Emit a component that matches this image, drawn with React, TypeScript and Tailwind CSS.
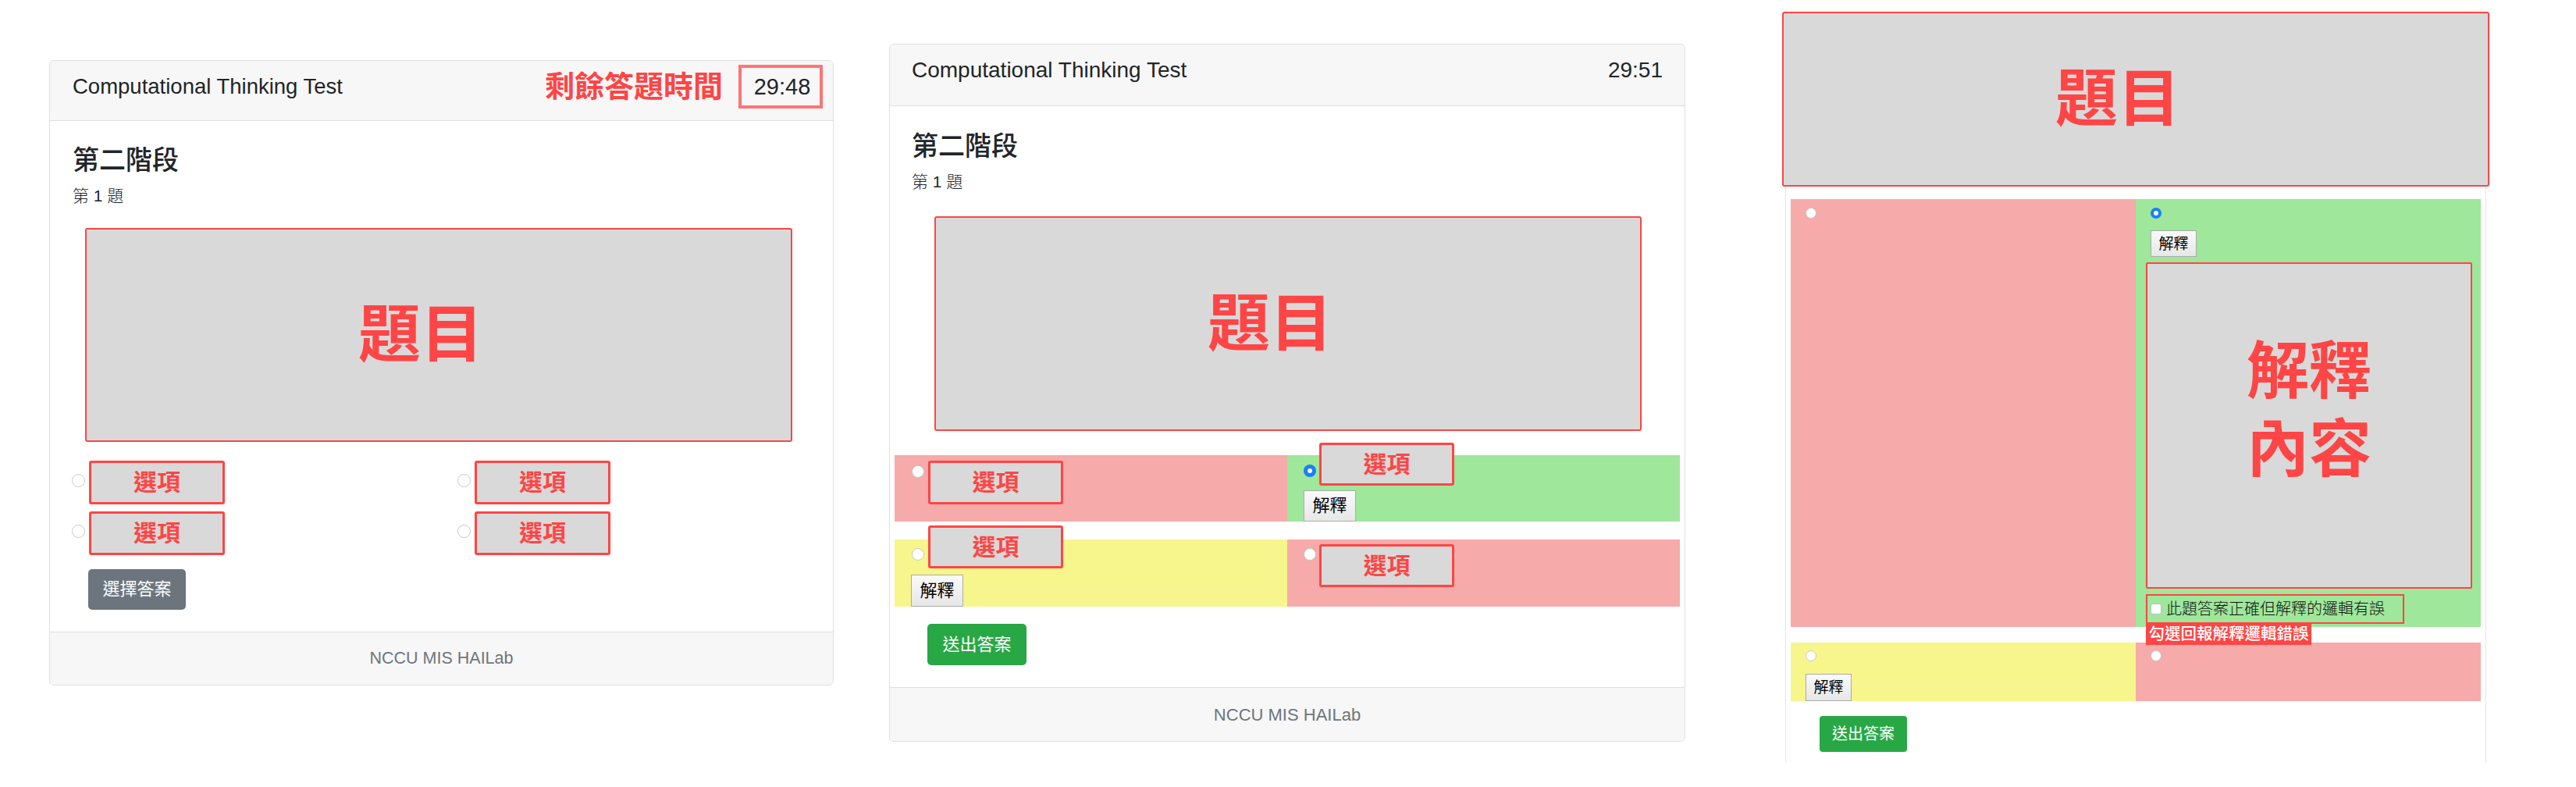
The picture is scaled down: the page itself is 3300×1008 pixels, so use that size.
import React from "react";

const FONT = "font-['Liberation_Sans','Noto_Sans_CJK_TC',sans-serif]";

function Radio({ cls, checked = false }: { cls: string; checked?: boolean }) {
  if (checked) {
    return (
      <span className={"flex shrink-0 items-center justify-center rounded-full bg-[#1a7ffb] " + cls}>
        <span className="block h-[6px] w-[6px] rounded-full bg-white" />
      </span>
    );
  }
  return <span className={"block shrink-0 rounded-full border border-[#c9c9c9] bg-white " + cls} />;
}

function OptionBox({ cls }: { cls: string }) {
  return (
    <div
      className={
        "flex shrink-0 items-center justify-center rounded-[3px] border-[3px] border-[#ff4545] bg-[#d9d9d9] text-[30px] leading-none font-bold text-[#ff4545] " +
        cls
      }
    >
      選項
    </div>
  );
}

function ExplainBtn({ cls }: { cls: string }) {
  return (
    <div
      className={
        "flex shrink-0 items-center justify-center border border-[#ababab] bg-gradient-to-b from-[#fafafa] to-[#e7e7e7] leading-none font-normal text-black " +
        cls
      }
    >
      解釋
    </div>
  );
}

function QuestionBox({ cls }: { cls: string }) {
  return (
    <div
      className={
        "flex shrink-0 items-center justify-center rounded-[3px] border-2 border-[#ff4545] bg-[#d9d9d9] pr-[46px] text-[80px] leading-none font-bold text-[#ff4545] " +
        cls
      }
    >
      題目
    </div>
  );
}

function Panel1() {
  return (
    <div className="mt-[77px] ml-[63px] w-[1005px] shrink-0 overflow-hidden rounded-[6px] border border-[#dfdfdf] bg-white">
      <div className="flex h-[77px] items-center justify-between border-b border-[#dfdfdf] bg-[#f7f7f7] pr-[13px] pb-[10px] pl-[29px]">
        <div className="text-[27.5px] leading-[28px] text-[#212529]">Computational Thinking Test</div>
        <div className="flex items-center gap-[20px]">
          <div className="text-[38px] leading-none font-bold text-[#ff4545]">剩餘答題時間</div>
          <div className="flex h-[56px] w-[108px] items-center justify-center border-[4px] border-[#ff7575] pl-[4px] text-[29px] leading-none text-[#212529]">
            29:48
          </div>
        </div>
      </div>
      <div className="flex flex-col pt-[33px] pr-[29px] pb-[28px] pl-[29px]">
        <div className="h-[34px] text-[34px] leading-[34px] font-medium text-[#212529]">第二階段</div>
        <div className="mt-[18px] h-[21px] text-[21px] leading-[21px] font-light text-[#212529]">第 1 題</div>
        <QuestionBox cls="mt-[31px] ml-[16px] h-[274px] w-[906px]" />
        <div className="mt-[24px] -ml-[1px] grid grid-cols-[494px_494px] gap-y-[9px]">
          {[0, 1, 2, 3].map((i) => (
            <div key={i} className="flex items-center">
              <Radio cls="-mt-[5px] h-[17px] w-[17px]" />
              <OptionBox cls="ml-[5px] h-[56px] w-[174px]" />
            </div>
          ))}
        </div>
        <div className="mt-[18px] ml-[20px] flex h-[52px] w-[125px] items-center justify-center rounded-[5px] bg-[#6c757d] text-[22px] leading-none text-white">
          選擇答案
        </div>
      </div>
      <div className="flex h-[68px] items-center justify-center border-t border-[#dfdfdf] bg-[#f7f7f7] text-[21.5px] text-[#6c757d]">
        NCCU MIS HAILab
      </div>
    </div>
  );
}

function Panel2() {
  return (
    <div className="mt-[56px] ml-[71px] w-[1020px] shrink-0 overflow-hidden rounded-[6px] border border-[#dfdfdf] bg-white">
      <div className="flex h-[79px] items-center justify-between border-b border-[#dfdfdf] bg-[#f7f7f7] pr-[28px] pb-[12px] pl-[28px]">
        <div className="text-[28px] leading-[28px] text-[#212529]">Computational Thinking Test</div>
        <div className="text-[28px] leading-[28px] text-[#212529]">29:51</div>
      </div>
      <div className="flex flex-col pt-[34px] pb-[28px]">
        <div className="ml-[28px] h-[34px] text-[34px] leading-[34px] font-medium text-[#212529]">第二階段</div>
        <div className="mt-[18px] ml-[28px] h-[21px] text-[21px] leading-[21px] font-light text-[#212529]">第 1 題</div>
        <QuestionBox cls="mt-[34px] ml-[57px] h-[275px] w-[906px]" />
        <div className="mt-[31px] ml-[6px] grid w-[1006px] grid-cols-2">
          <div className="h-[85px] bg-[#f6aaaa] pl-[22px]">
            <div className="flex items-start">
              <Radio cls="mt-[13px] h-[16px] w-[16px]" />
              <OptionBox cls="mt-[7px] ml-[5px] h-[56px] w-[173px]" />
            </div>
          </div>
          <div className="h-[85px] bg-[#9ee79b] pl-[21px]">
            <div className="flex h-[45px] items-start">
              <Radio checked cls="mt-[12px] h-[16px] w-[16px]" />
              <OptionBox cls="-mt-[16px] ml-[4px] h-[55px] w-[173px]" />
            </div>
            <ExplainBtn cls="h-[40px] w-[67px] text-[22px]" />
          </div>
        </div>
        <div className="mt-[23px] ml-[6px] grid w-[1006px] grid-cols-2">
          <div className="h-[86px] bg-[#f6f68c] pl-[21px]">
            <div className="flex h-[45px] items-start">
              <Radio cls="mt-[11px] ml-[1px] h-[16px] w-[16px]" />
              <OptionBox cls="-mt-[18px] ml-[5px] h-[55px] w-[173px]" />
            </div>
            <ExplainBtn cls="h-[41px] w-[67px] text-[22px]" />
          </div>
          <div className="h-[86px] bg-[#f6aaaa] pl-[21px]">
            <div className="flex items-start">
              <Radio cls="mt-[11px] h-[16px] w-[16px]" />
              <OptionBox cls="mt-[6px] ml-[4px] h-[55px] w-[173px]" />
            </div>
          </div>
        </div>
        <div className="mt-[22px] ml-[48px] flex h-[53px] w-[127px] items-center justify-center rounded-[5px] bg-[#28a745] text-[22px] leading-none text-white">
          送出答案
        </div>
      </div>
      <div className="flex h-[69px] items-center justify-center border-t border-[#dfdfdf] bg-[#f7f7f7] text-[22px] text-[#6c757d]">
        NCCU MIS HAILab
      </div>
    </div>
  );
}

function Panel3() {
  return (
    <div className="mt-[15px] ml-[124px] flex w-[906px] shrink-0 flex-col">
      <QuestionBox cls="h-[224px] w-[906px]" />
      <div className="ml-[4px] flex h-[738px] w-[898px] shrink-0 flex-col border-x border-[#e6e6e6] bg-white">
        <div className="mt-[16px] ml-[6px] grid w-[884px] shrink-0 grid-cols-2">
          <div className="h-[548px] bg-[#f6aaaa] pl-[19px]">
            <Radio cls="mt-[11px] h-[14px] w-[14px]" />
          </div>
          <div className="flex h-[548px] flex-col bg-[#9ee79b] pl-[13px]">
            <Radio checked cls="mt-[11px] ml-[6px] h-[14px] w-[14px]" />
            <ExplainBtn cls="mt-[15px] ml-[6px] h-[34px] w-[59px] text-[19px]" />
            <div className="mt-[7px] flex h-[418px] w-[418px] shrink-0 flex-col items-center justify-center rounded-[2px] border-2 border-[#ff4545] bg-[#d9d9d9] pb-[38px] text-[80px] leading-[100px] font-bold text-[#ff4545]">
              <div>解釋</div>
              <div>內容</div>
            </div>
            <div className="relative mt-[7px] flex h-[38px] w-[331px] shrink-0 items-center border-2 border-[#ff4545] pl-[4px]">
              <span className="block h-[14px] w-[14px] shrink-0 rounded-[3px] border border-[#bdbdbd] bg-white" />
              <span className="ml-[6px] text-[20px] leading-none font-light text-[#111]">此題答案正確但解釋的邏輯有誤</span>
            </div>
            <div className="relative z-10 flex h-[27px] w-[212px] shrink-0 items-center justify-center bg-[#ff4545] text-[20.5px] leading-none font-medium text-white">
              勾選回報解釋邏輯錯誤
            </div>
          </div>
        </div>
        <div className="mt-[20px] ml-[6px] grid w-[884px] shrink-0 grid-cols-2">
          <div className="flex h-[75px] flex-col bg-[#f6f68c] pl-[19px]">
            <Radio cls="mt-[10px] h-[14px] w-[14px]" />
            <ExplainBtn cls="mt-[16px] h-[35px] w-[59px] text-[19px]" />
          </div>
          <div className="h-[75px] bg-[#f6aaaa] pl-[19px]">
            <Radio cls="mt-[10px] h-[14px] w-[14px]" />
          </div>
        </div>
        <div className="mt-[19px] ml-[43px] flex h-[46px] w-[112px] shrink-0 items-center justify-center rounded-[4px] bg-[#28a745] text-[20px] leading-none text-white">
          送出答案
        </div>
      </div>
    </div>
  );
}

export default function App() {
  return (
    <div className={"flex h-[1008px] w-[3300px] items-start overflow-hidden bg-white " + FONT}>
      <Panel1 />
      <Panel2 />
      <Panel3 />
    </div>
  );
}
